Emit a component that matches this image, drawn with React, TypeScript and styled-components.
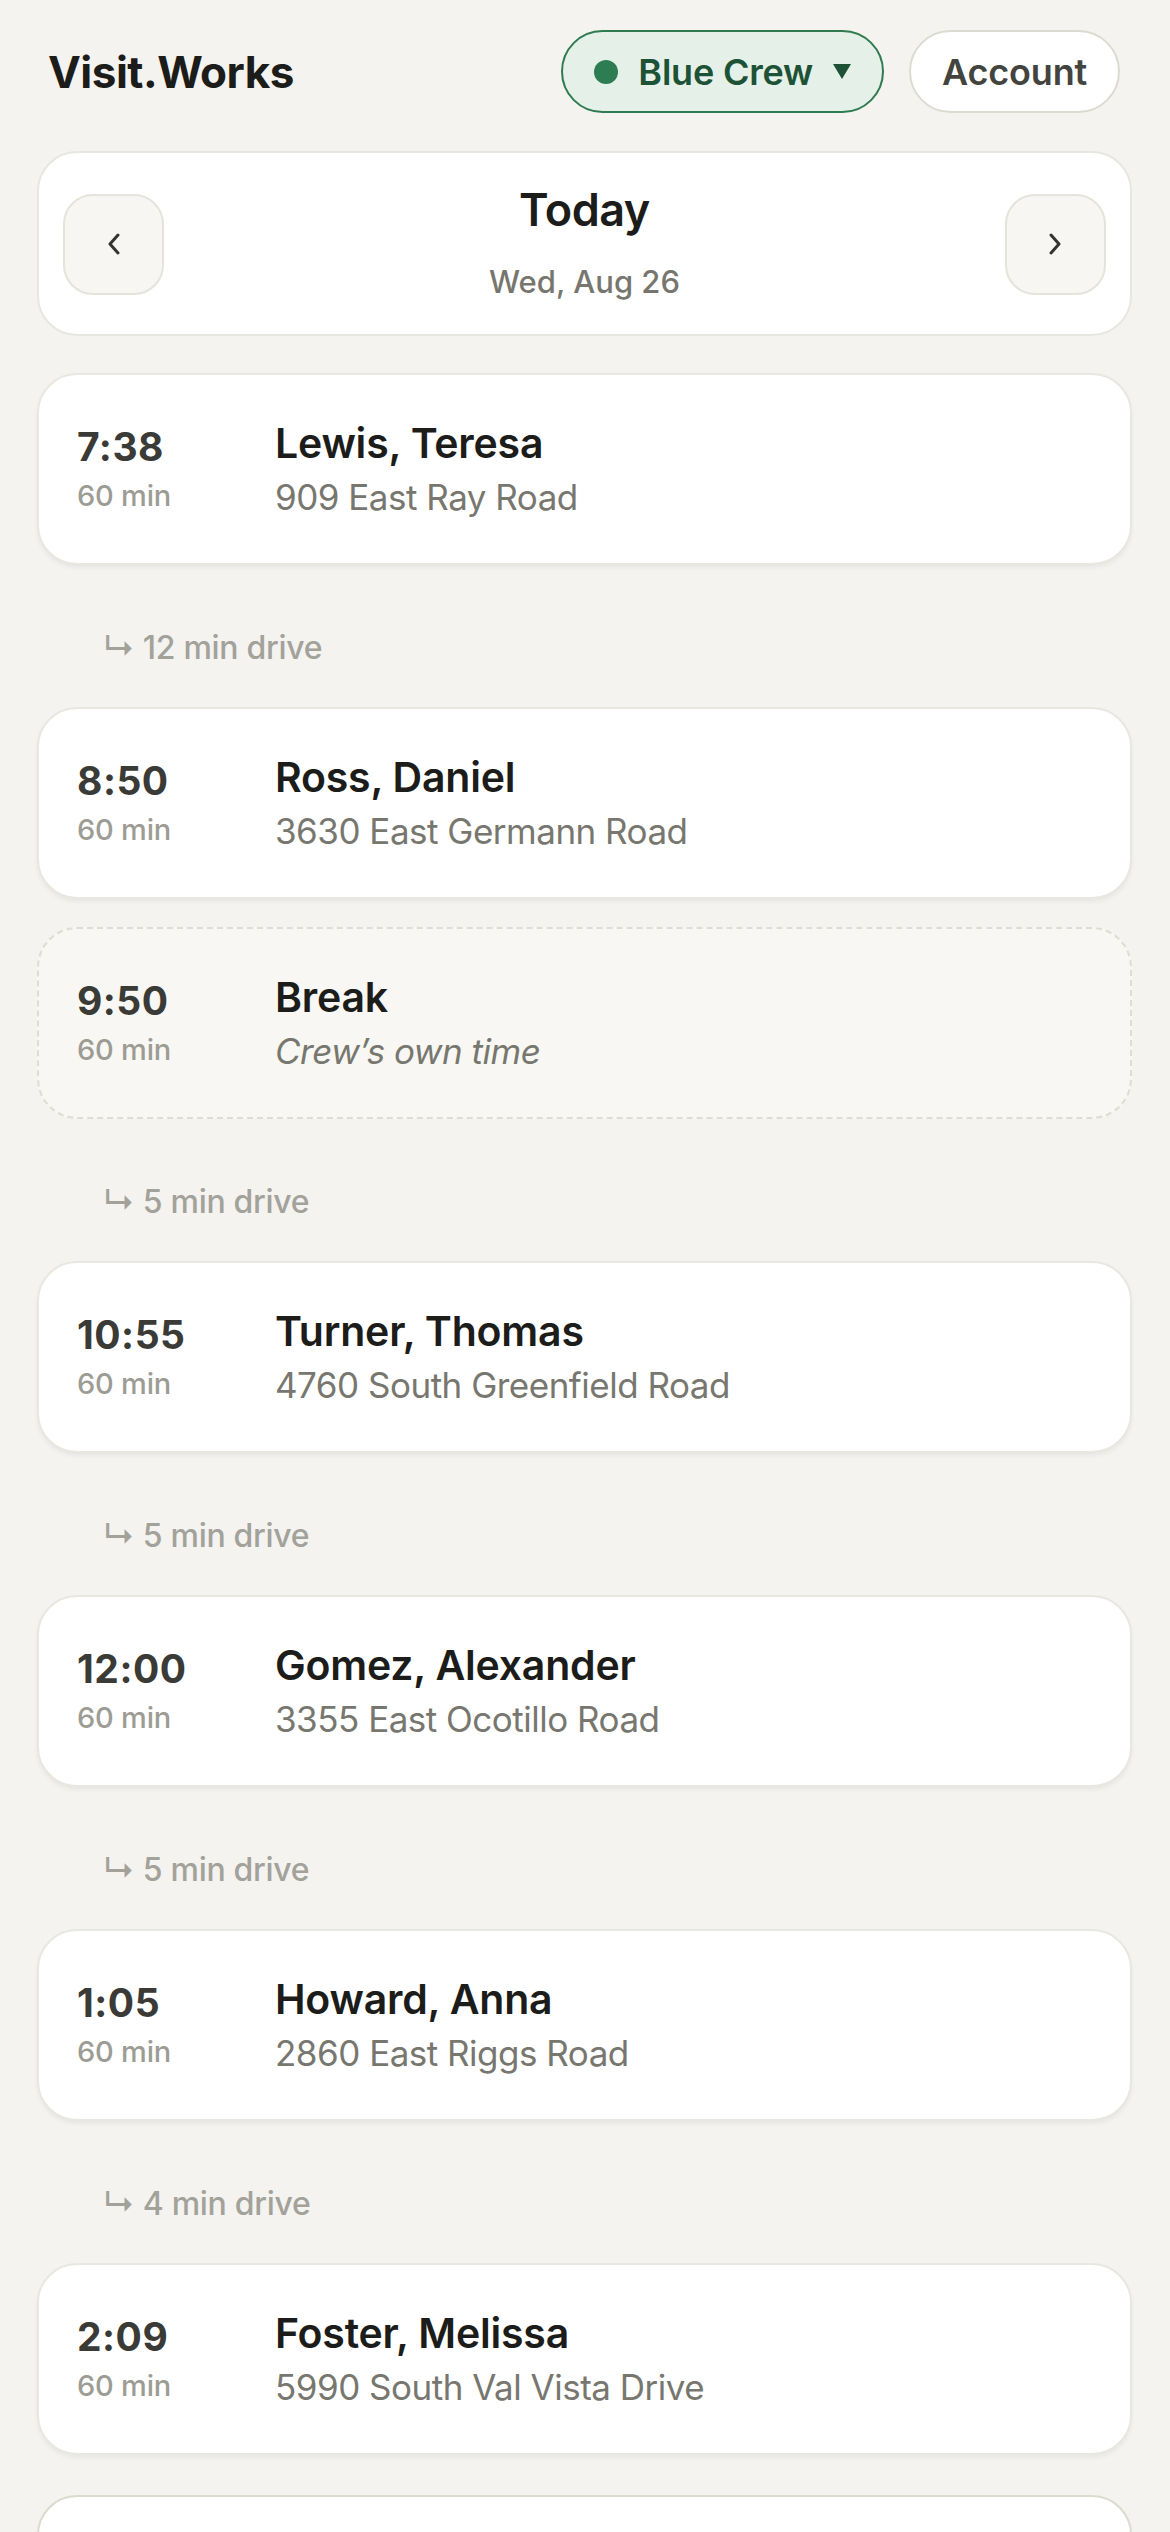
import styled, { createGlobalStyle } from 'styled-components';

const GlobalStyle = createGlobalStyle`
  html, body {
    margin: 0;
    padding: 0;
    background: #f4f3ef;
  }
  body {
    font-family: Inter, "Noto Sans", "Liberation Sans", sans-serif;
    color: #1c1c1a;
  }
`;

type Visit = {
  kind: 'visit' | 'break' | 'drive';
  time?: string;
  length?: string;
  title?: string;
  sub?: string;
  drive?: string;
  later?: boolean;
};

const schedule: Visit[] = [
  { kind: 'visit', time: '7:38', length: '60 min', title: 'Lewis, Teresa', sub: '909 East Ray Road' },
  { kind: 'drive', drive: '12 min drive' },
  { kind: 'visit', time: '8:50', length: '60 min', title: 'Ross, Daniel', sub: '3630 East Germann Road' },
  { kind: 'break', time: '9:50', length: '60 min', title: 'Break', sub: 'Crew’s own time' },
  { kind: 'drive', drive: '5 min drive' },
  { kind: 'visit', time: '10:55', length: '60 min', title: 'Turner, Thomas', sub: '4760 South Greenfield Road' },
  { kind: 'drive', drive: '5 min drive' },
  { kind: 'visit', time: '12:00', length: '60 min', title: 'Gomez, Alexander', sub: '3355 East Ocotillo Road' },
  { kind: 'drive', drive: '5 min drive' },
  { kind: 'visit', time: '1:05', length: '60 min', title: 'Howard, Anna', sub: '2860 East Riggs Road' },
  { kind: 'drive', drive: '4 min drive' },
  { kind: 'visit', time: '2:09', length: '60 min', title: 'Foster, Melissa', sub: '5990 South Val Vista Drive' },
  { kind: 'visit', time: '3:15', length: '60 min', title: 'Bennett, Laura', sub: '1420 East Pecos Road', later: true },
];

const Page = styled.div`
  padding: 30px 38px 60px 37px;
  display: flex;
  flex-direction: column;
`;

const Header = styled.header`
  display: flex;
  align-items: center;
  justify-content: space-between;
  padding: 0 12px 0 11px;
  height: 83px;
`;

const Logo = styled.h1`
  margin: 0;
  font-size: 44px;
  font-weight: 700;
  letter-spacing: -0.5px;
  color: #1c1c1a;
`;

const HeaderActions = styled.div`
  display: flex;
  gap: 25px;
`;

const Pill = styled.button<{ $active?: boolean }>`
  height: 83px;
  box-sizing: border-box;
  border-radius: 42px;
  display: flex;
  align-items: center;
  gap: 20px;
  padding: 0 31px;
  font-family: inherit;
  font-size: 36px;
  font-weight: 600;
  letter-spacing: -0.2px;
  border: 2.5px solid ${(p) => (p.$active ? '#2f7a4f' : '#dcdbd2')};
  background: ${(p) => (p.$active ? '#e5f1e8' : '#ffffff')};
  color: ${(p) => (p.$active ? '#1d5236' : '#44443f')};
`;

const Dot = styled.span`
  width: 24px;
  height: 24px;
  border-radius: 50%;
  background: #2e7d52;
`;

const DateCard = styled.section`
  margin-top: 38px;
  background: #fff;
  border: 2px solid #e7e6e0;
  border-radius: 40px;
  padding: 34px 24px 33px;
  display: flex;
  align-items: center;
  justify-content: space-between;
`;

const NavButton = styled.button`
  width: 101px;
  height: 101px;
  box-sizing: border-box;
  border-radius: 30px;
  border: 2px solid #e4e3dc;
  background: #f7f6f2;
  display: flex;
  align-items: center;
  justify-content: center;
  padding: 0;
`;

const DateText = styled.div`
  display: flex;
  flex-direction: column;
  align-items: center;
  gap: 30px;
`;

const DayTitle = styled.div`
  font-size: 45px;
  font-weight: 600;
  letter-spacing: -0.5px;
  color: #1c1c1a;
  line-height: 46px;
`;

const DaySub = styled.div`
  font-size: 31px;
  font-weight: 500;
  color: #76766e;
  line-height: 38px;
`;

const List = styled.div`
  margin-top: 37px;
  display: flex;
  flex-direction: column;
  gap: 28px;
`;

const Card = styled.div<{ $break?: boolean; $later?: boolean }>`
  height: 192px;
  box-sizing: border-box;
  border-radius: 40px;
  display: grid;
  grid-template-columns: 198px 1fr;
  align-items: center;
  padding: 0 38px;
  margin-top: ${(p) => (p.$later ? '12px' : '0')};
  background: ${(p) => (p.$break ? '#f8f7f3' : '#ffffff')};
  border: 2px ${(p) => (p.$break ? 'dashed #dddcd5' : p.$later ? 'solid #dcdbd0' : 'solid #e8e7e1')};
  box-shadow: ${(p) => (p.$break ? 'none' : '0 3px 4px rgba(0, 0, 0, 0.05)')};
`;

const TimeCol = styled.div`
  display: flex;
  flex-direction: column;
  gap: 10px;
`;

const Time = styled.div`
  font-size: 39px;
  font-weight: 700;
  color: #3a3a36;
  line-height: 44px;
  letter-spacing: 0.5px;
`;

const Length = styled.div`
  font-size: 29px;
  font-weight: 500;
  color: #9c9c94;
  line-height: 34px;
  letter-spacing: -0.2px;
`;

const InfoCol = styled.div`
  display: flex;
  flex-direction: column;
  gap: 10px;
`;

const Name = styled.div`
  font-size: 41px;
  font-weight: 600;
  color: #1c1c1a;
  line-height: 46px;
  letter-spacing: -0.2px;
`;

const Address = styled.div<{ $italic?: boolean }>`
  font-size: 35px;
  font-weight: 400;
  color: #77776f;
  line-height: 42px;
  letter-spacing: -0.5px;
  font-style: ${(p) => (p.$italic ? 'italic' : 'normal')};
`;

const Drive = styled.div`
  padding: 37px 0 13px 66px;
  font-size: 32px;
  font-weight: 500;
  color: #a2a29b;
  line-height: 36px;
  letter-spacing: -0.3px;
`;

const Chevron = ({ dir }: { dir: 'left' | 'right' }) => (
  <svg width="14" height="22" viewBox="0 0 14 22">
    <polyline
      points={dir === 'left' ? '11,2 3,11 11,20' : '3,2 11,11 3,20'}
      fill="none"
      stroke="#333330"
      strokeWidth="3"
      strokeLinecap="round"
      strokeLinejoin="round"
    />
  </svg>
);

const Caret = () => (
  <svg width="18" height="15" viewBox="0 0 18 15">
    <polygon points="0,0 18,0 9,15" fill="#1d5236" />
  </svg>
);

const App = () => {
  return (
    <>
      <GlobalStyle />
      <Page>
        <Header>
          <Logo>Visit.Works</Logo>
          <HeaderActions>
            <Pill $active>
              <Dot />
              Blue Crew
              <Caret />
            </Pill>
            <Pill>Account</Pill>
          </HeaderActions>
        </Header>

        <DateCard>
          <NavButton aria-label="Previous day">
            <Chevron dir="left" />
          </NavButton>
          <DateText>
            <DayTitle>Today</DayTitle>
            <DaySub>Wed, Aug 26</DaySub>
          </DateText>
          <NavButton aria-label="Next day">
            <Chevron dir="right" />
          </NavButton>
        </DateCard>

        <List>
          {schedule.map((item, i) =>
            item.kind === 'drive' ? (
              <Drive key={i}>↳ {item.drive}</Drive>
            ) : (
              <Card key={i} $break={item.kind === 'break'} $later={item.later}>
                <TimeCol>
                  <Time>{item.time}</Time>
                  <Length>{item.length}</Length>
                </TimeCol>
                <InfoCol>
                  <Name>{item.title}</Name>
                  <Address $italic={item.kind === 'break'}>{item.sub}</Address>
                </InfoCol>
              </Card>
            )
          )}
        </List>
      </Page>
    </>
  );
};

export default App;
